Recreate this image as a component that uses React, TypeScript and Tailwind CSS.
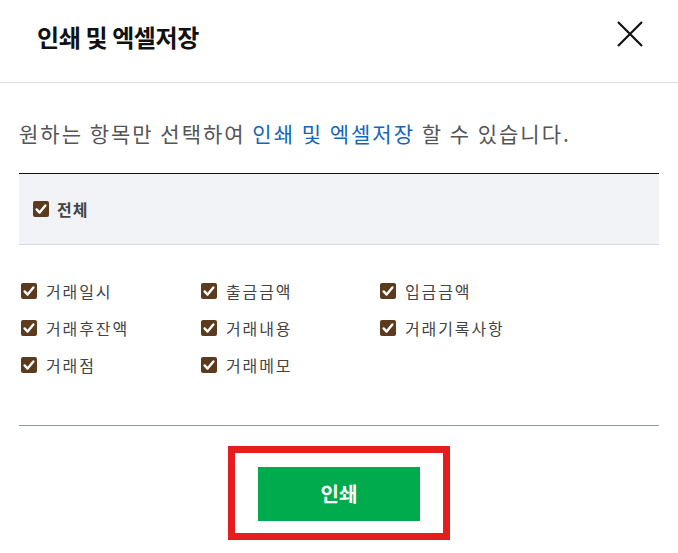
import { useState } from "react";

const font = { fontFamily: '"Noto Sans CJK KR", "Noto Sans", sans-serif' };

const items = [
  "거래일시",
  "출금금액",
  "입금금액",
  "거래후잔액",
  "거래내용",
  "거래기록사항",
  "거래점",
  "거래메모",
];

function Check({ checked }: { checked: boolean }) {
  return (
    <span
      className={
        checked
          ? "flex h-4 w-4 shrink-0 items-center justify-center rounded-[2px] bg-[#5b3a1d]"
          : "flex h-4 w-4 shrink-0 items-center justify-center rounded-[2px] border border-[#767676] bg-white"
      }
    >
      {checked && (
        <svg viewBox="0 0 16 16" className="h-4 w-4">
          <path d="M3.6 8.4 L6.6 11.6 L12.4 4.4" fill="none" stroke="#fff" strokeWidth="2.4" strokeLinecap="round" strokeLinejoin="round" />
        </svg>
      )}
    </span>
  );
}

export default function App() {
  const [checked, setChecked] = useState<boolean[]>(items.map(() => true));
  const all = checked.every(Boolean);

  return (
    <div className="h-[553px] w-[678px] bg-white" style={font}>
      {/* Header */}
      <div className="flex h-[83px] items-start justify-between border-b border-[#dcdcdc] pl-[37px] pr-[35px]">
        <h1 className="pt-[21px] text-[24px] leading-[32px] font-bold tracking-[-0.4px] text-[#111]">인쇄 및 엑셀저장</h1>
        <button className="mt-[21px] text-black">
          <svg viewBox="0 0 26 26" className="h-[26px] w-[26px]">
            <path d="M1 1 L25 25 M25 1 L1 25" stroke="#111" strokeWidth="2.2" />
          </svg>
        </button>
      </div>

      <div className="px-[19px]">
        <p className="mt-[36px] text-[21px] leading-[28px] tracking-[2px] whitespace-nowrap text-[#555]">
          원하는 항목만 선택하여 <span className="text-[#1466b8]">인쇄 및 엑셀저장</span> 할 수 있습니다.
        </p>

        {/* 전체 */}
        <div className="mt-[26px] flex h-[72px] items-center border-t border-b border-t-[#111] border-b-[#d4dae3] bg-[#f2f3f7] pl-[14px]">
          <label
            className="flex cursor-pointer items-center gap-[8px]"
            onClick={() => setChecked(items.map(() => !all))}
          >
            <Check checked={all} />
            <span className="text-[16px] font-bold tracking-[1px] text-[#444]">전체</span>
          </label>
        </div>

        {/* Items */}
        <div className="mt-[27px] grid grid-cols-[180px_179px_1fr] pl-[2px]">
          {items.map((label, i) => (
            <label
              key={label}
              className="flex h-[37px] cursor-pointer items-center gap-[9px]"
              onClick={() => setChecked(checked.map((c, j) => (j === i ? !c : c)))}
            >
              <Check checked={checked[i]} />
              <span className="text-[16px] tracking-[1.9px] text-[#444]">{label}</span>
            </label>
          ))}
        </div>

        <div className="mt-[42px] border-t border-[#8e96a8]" />

        {/* Print button */}
        <div className="mx-auto mt-[20px] w-[222px] border-[7px] border-[#e51d1d] px-[23px] pt-[14px] pb-[12px]">
          <button className="h-[54px] w-full bg-[#00ab4d] text-[20px] font-bold text-white">인쇄</button>
        </div>
      </div>
    </div>
  );
}
